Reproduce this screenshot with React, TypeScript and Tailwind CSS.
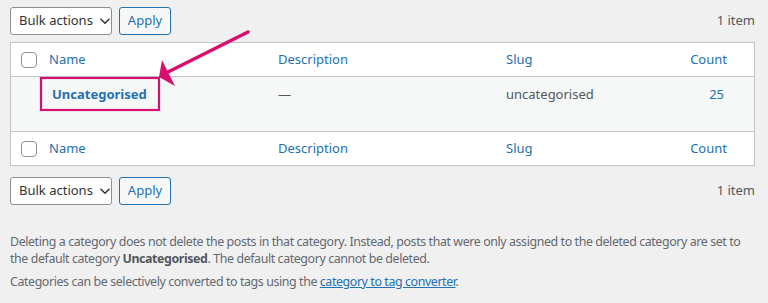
import React from "react";

const Chevron = () => (
  <svg width="10" height="7" viewBox="0 0 10 7" fill="none" className="ml-[7px] mt-[1px]">
    <path d="M1 1.2 5 5.2 9 1.2" stroke="#2c3338" strokeWidth="1.5" strokeLinecap="round" strokeLinejoin="round" />
  </svg>
);

const Checkbox = () => (
  <span className="ml-[10px] block h-4 w-4 rounded-[4px] border border-[#8c8f94] bg-white" />
);

const TableNav = () => (
  <div className="flex h-7 items-center">
    <button className="flex h-7 w-[102px] items-center rounded-[3px] border border-[#8c8f94] bg-white pl-[8px] text-[13px] text-[#2c3338]">
      Bulk actions
      <Chevron />
    </button>
    <button className="ml-[7px] h-7 w-[52px] rounded-[3px] border border-[#2271b1] bg-[#f6f7f7] text-[13px] text-[#2271b1]">
      Apply
    </button>
    <span className="ml-auto text-[13px] text-[#50575e]">1 item</span>
  </div>
);

const HeaderRow = ({ bottom }: { bottom?: boolean }) => (
  <div
    className={`grid h-[34px] grid-cols-[28px_229px_228px_185px_1fr] items-center bg-white text-[13px] text-[#2271b1] ${
      bottom ? "border-t border-[#c3c4c7]" : "border-b border-[#c3c4c7]"
    }`}
  >
    <Checkbox />
    <span className="pl-[10px]">Name</span>
    <span className="pl-[10px]">Description</span>
    <span className="pl-[10px]">Slug</span>
    <span className="pr-[27px] text-right">Count</span>
  </div>
);

export default function App() {
  return (
    <div
      className="relative h-[303px] w-[768px] overflow-hidden bg-[#f0f0f1] px-[10px] pt-[7px] pr-[13px]"
      style={{ fontFamily: '"Noto Sans", "Open Sans", sans-serif' }}
    >
      <TableNav />

      {/* Categories table */}
      <div className="mt-[7px] border border-[#c3c4c7] bg-white">
        <HeaderRow />
        <div className="grid h-[54px] grid-cols-[28px_229px_228px_185px_1fr] items-start bg-[#f6f7f7] pt-[8px] text-[13px] text-[#50575e]">
          <span />
          <span className="pl-[13px] font-bold text-[#2271b1]">Uncategorised</span>
          <span className="pl-[10px]">—</span>
          <span className="pl-[10px]">uncategorised</span>
          <span className="pr-[30px] text-right text-[#2271b1]">25</span>
        </div>
        <HeaderRow bottom />
      </div>

      <div className="mt-[11px]">
        <TableNav />
      </div>

      {/* Notes */}
      <div className="mt-[28px] text-[12.4px] leading-[17px] tracking-[-0.4px] text-[#646970]">
        <p>
          Deleting a category does not delete the posts in that category. Instead, posts that were only assigned to the
          deleted category are set to the default category <strong className="text-[#50575e]">Uncategorised</strong>. The
          default category cannot be deleted.
        </p>
        <p className="mt-[6px]">
          Categories can be selectively converted to tags using the{" "}
          <a className="text-[#2271b1] underline">category to tag converter</a>.
        </p>
      </div>

      {/* Annotation */}
      <svg className="pointer-events-none absolute left-0 top-0" width="768" height="303" viewBox="0 0 768 303">
        <rect x="41" y="78" width="118" height="32" fill="none" stroke="#d6106e" strokeWidth="2.2" />
        <line x1="248" y1="32" x2="168" y2="72" stroke="#d6106e" strokeWidth="3.5" strokeLinecap="round" />
        <polygon points="159,77 162,60 175,86" fill="#d6106e" />
      </svg>
    </div>
  );
}
